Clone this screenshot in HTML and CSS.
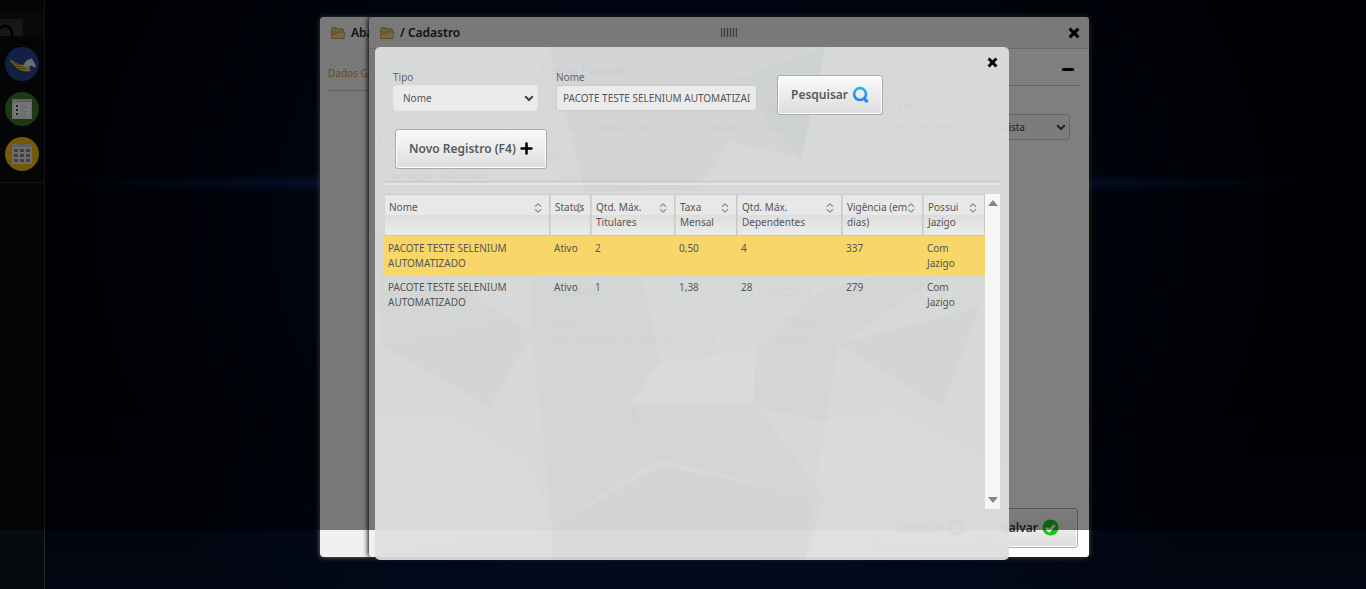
FILE: index.html
```html
<!DOCTYPE html>
<html lang="pt-BR">
<head>
<meta charset="utf-8">
<title>Cadastro</title>
<link rel="stylesheet" href="styles.css">
</head>
<body>
<svg class="defs" aria-hidden="true">
  <symbol id="folder" viewBox="0 0 16 14"><path d="M1.500 12V3l1-1.500h4l1 1.500h5.500l.5.800V6" fill="#e3bd70" stroke="#c29b50"/><path d="M7 2.500h5v1.500H7z" fill="#8fc0c8"/><path d="M1.500 12.500V8h4.500l1.500-2H15l-1 6.500z" fill="#f0cf88" stroke="#c29b50"/></symbol>
  <symbol id="cross" viewBox="0 0 12 12"><path d="M2.800 2.800l6.400 6.400M9.200 2.800L2.800 9.200" stroke="currentColor" stroke-width="3.200" stroke-linecap="square"/></symbol>
  <symbol id="chevron" viewBox="0 0 10 7"><path d="M1.200 1.200L5 5l3.800-3.800" fill="none" stroke="currentColor" stroke-width="2"/></symbol>
  <symbol id="sort" viewBox="0 0 8 10"><path d="M1 3.800L4 1l3 2.800M1 6.200L4 9l3-2.800" fill="none" stroke="#999" stroke-width="1.300"/></symbol>
</svg>

<nav class="sidebar">
  <div class="side-top"><button class="side-search" aria-label="Buscar"><svg viewBox="0 0 18 18"><circle cx="9" cy="9" r="7" fill="none" stroke="#000" stroke-width="2.500"/></svg></button></div>
  <div class="apps">
    <a class="app blue" href="#" aria-label="Início"><svg viewBox="0 0 34 34"><path d="M5 12c5 4 9 5 13 6 3 1 5 3 8 6-5 1-10 0-13-2-1-1-3-2-4-4-2-1-3-3-4-6z" fill="#e3bb32"/><path d="M7 16l9 2M9 19l10 1M12 21l9 1" stroke="#8a6b16" stroke-width=".7"/><path d="M18 19c2-4 4-7 8-7l1-1 .500 1.500L29 15l2 4-1 1.500-4-2c-2 1-2 2 0 5.500-3-3-3-4-8-5z" fill="#d9dbe0"/></svg></a>
    <a class="app green" href="#" aria-label="Cadastros"><svg viewBox="0 0 34 34"><path fill="#dcdcdc" d="M7 7h20v20H7z"/><path fill="#c0c0c0" d="M7 7h20v3H7z"/><path d="M8 8.500h6" stroke="#eee" stroke-dasharray="1 1"/><path fill="#f0f0f0" d="M9 11h16v14H9z"/><path fill="#444" d="M11 13h2v2h-2zM11 17h2v2h-2zM11 21h2v2h-2z"/><path stroke="#ccc" d="M15 13.500h6M15 15.500h8M15 17.500h5M15 19.500h8M15 21.500h6M15 23.500h7"/></svg></a>
    <a class="app gold" href="#" aria-label="Tabelas"><svg viewBox="0 0 34 34"><path fill="#d8d8d8" d="M7 7h20v20H7z"/><path fill="#bbb" d="M7 7h20v3H7z"/><path d="M8 8.500h6" stroke="#eee" stroke-dasharray="1 1"/><path fill="#808080" d="M9 12h4v3H9zM15 12h4v3h-4zM21 12h4v3h-4zM9 17h4v3H9zM15 17h4v3h-4zM21 17h4v3h-4zM9 22h4v3H9zM15 22h4v3h-4zM21 22h4v3h-4z"/></svg></a>
  </div>
</nav>

<section class="window back">
  <header class="window-head"><svg class="folder"><use href="#folder"/></svg><h1>Abas</h1></header>
  <ul class="tabs"><li><a href="#">Dados Gerais</a></li></ul>
</section>

<section class="window front">
  <header class="window-head">
    <svg class="folder"><use href="#folder"/></svg><h2>/ Cadastro</h2>
    <span class="grip"></span>
    <button class="icon-button" aria-label="Fechar cadastro"><svg class="cross"><use href="#cross"/></svg></button>
  </header>
  <div class="window-body">
    <ul class="menu">
      <li><a class="current" href="#">Dados Pessoais</a></li>
      <li><a href="#">Dados Complementares</a></li>
      <li><a href="#">Endereços da Pessoa</a></li>
      <li><a href="#">Informações Adicionais</a></li>
    </ul>
    <div class="main">
      <div class="section-head"><h3>Dados Pessoais</h3><button class="icon-button" aria-label="Recolher"><svg class="minus" viewBox="0 0 12 3"><rect width="12" height="3" rx="1"/></svg></button></div>
      <div class="person">
        <label class="field s6">Nome*<input value="POSTO COMBUSTÍVEL TESTE SELENIUM"></label>
        <label class="field s3">Tipo de Pessoa *<select><option>Jurídica</option></select></label>
        <label class="field s6">Órgão Emissor<span class="pick"><select><option>Carteira de Identidade Classista</option></select><svg class="chevron"><use href="#chevron"/></svg></span></label>
        <label class="field s15">Situação<select><option>Selecione</option></select></label>
        <label class="field s4 later">CNPJ<input value="41.526.894/1282-32"></label>
        <label class="field s6 later">Nome Fantasia<input value="POSTO COMBUSTÍVEL TESTE SELENIUM"></label>
        <span class="s5"></span>
        <label class="field s6">Inscrição Estadual<input value="58084420"></label>
        <label class="field s6">Inscrição Municipal<input value="60922919"></label>
        <span class="s3"></span>
        <label class="field s6">Pacote<input value="PACOTE TESTE SELENIUM AUTOMA"></label>
        <label class="field s6">Classificação<select><option>Selecione</option></select></label>
      </div>
    </div>
  </div>
  <footer class="window-foot">
    <button class="button">Cancelar <svg class="status" viewBox="0 0 18 18"><circle cx="9" cy="9" r="8.500" fill="#e0351b"/><path d="M5.500 5.500l7 7m0-7l-7 7" stroke="#fff" stroke-width="2.500"/></svg></button>
    <button class="button">Salvar <svg class="status" viewBox="0 0 18 18"><circle cx="9" cy="9" r="8.500" fill="#1fc31a"/><path d="M4.500 9.500l3 3 6-6" fill="none" stroke="#fff" stroke-width="2.800"/></svg></button>
  </footer>
</section>

<div class="shade"></div>

<section class="popup" role="dialog" aria-label="Pesquisa">
  <svg class="facets" viewBox="12 21 1529 1517" preserveAspectRatio="none" aria-hidden="true">
    <g fill="#888ea5" fill-opacity=".06"><path d="M430 21H1098L1040 350 870 300 790 440 520 450 480 250z"/><path d="M30 905L330 820 390 870 290 1085z"/><path d="M1130 900L1470 790 1380 1085z"/><path d="M440 1440L700 1260 1098 1355 1050 1538H440z"/></g>
    <g fill="#68706d" fill-opacity=".025"><path d="M870 120L1098 21 1040 350z"/><path d="M390 700L630 560 700 950 630 1070 690 1240 440 1440 390 870z"/><path d="M930 920L1090 740 1500 600 1130 900 1100 1130 925 1085z"/><path d="M12 560L330 820 30 905z"/><path d="M620 1075H925L1100 1355 690 1240z"/></g>
    <g fill="#fff" fill-opacity=".06"><path d="M170 1100L380 1240 440 1440 12 1538V1120z"/><path d="M700 950L930 920 925 1085H630z"/><path d="M1098 1130L1255 1095 1541 1260V1538H1050z"/></g>
  </svg>
  <button class="icon-button popup-close" aria-label="Fechar"><svg class="cross"><use href="#cross"/></svg></button>
  <form class="search">
    <div class="field tipo"><label for="tipo">Tipo</label><span class="pick"><select id="tipo"><option>Nome</option></select><svg class="chevron"><use href="#chevron"/></svg></span></div>
    <div class="field nome"><label for="nome">Nome</label><input id="nome" value="PACOTE TESTE SELENIUM AUTOMATIZADO"></div>
    <button class="button" type="button">Pesquisar <svg class="status" viewBox="0 0 18 18"><defs><linearGradient id="lens" x2="0" y2="1"><stop stop-color="#1ab7f5"/><stop offset="1" stop-color="#2a80f5"/></linearGradient></defs><circle cx="8.500" cy="8.500" r="6.300" fill="none" stroke="url(#lens)" stroke-width="2.800"/><path d="M13 13.500l2.500 2.500" stroke="#2a8af5" stroke-width="3.500" stroke-linecap="round"/></svg></button>
  </form>
  <div class="actions"><button class="button">Novo Registro (F4) <svg class="plus" viewBox="0 0 12 12"><path d="M6 1.500v9M1.500 6h9" stroke="#000" stroke-width="2.400" stroke-linecap="round"/></svg></button></div>
  <hr>
  <div class="results">
    <table>
      <colgroup><col><col class="c-status"><col class="c-tit"><col class="c-small"><col class="c-dep"><col class="c-vig"><col class="c-small"></colgroup>
      <thead><tr>
        <th>Nome<svg class="sort"><use href="#sort"/></svg></th><th>Status<svg class="sort"><use href="#sort"/></svg></th><th>Qtd. Máx. Titulares<svg class="sort"><use href="#sort"/></svg></th><th>Taxa Mensal<svg class="sort"><use href="#sort"/></svg></th><th>Qtd. Máx. Dependentes<svg class="sort"><use href="#sort"/></svg></th><th>Vigência (em dias)<svg class="sort"><use href="#sort"/></svg></th><th>Possui Jazigo<svg class="sort"><use href="#sort"/></svg></th>
      </tr></thead>
      <tbody>
        <tr class="selected"><td>PACOTE TESTE SELENIUM AUTOMATIZADO</td><td>Ativo</td><td>2</td><td>0,50</td><td>4</td><td>337</td><td>Com<br>Jazigo</td></tr>
        <tr><td>PACOTE TESTE SELENIUM AUTOMATIZADO</td><td>Ativo</td><td>1</td><td>1,38</td><td>28</td><td>279</td><td>Com<br>Jazigo</td></tr>
      </tbody>
    </table>
    <div class="track"><svg viewBox="0 0 10 6"><path d="M5 0l5 6H0z"/></svg><svg viewBox="0 0 10 6"><path d="M5 6l5-6H0z"/></svg></div>
  </div>
</section>
</body>
</html>
```
FILE: styles.css
```css
* { box-sizing: border-box; }
body {
  margin: 0;
  height: 100vh;
  overflow: hidden;
  position: relative;
  font: 10px/15px "Noto Sans", sans-serif;
  color: #555;
  background:
    radial-gradient(ellipse 46% 2% at 50% 31%, #0c3690, transparent),
    radial-gradient(ellipse 46% 90% at 50% 38%, #051238, transparent),
    linear-gradient(transparent 70%, #020713),
    #010208;
}
h1, h2, h3, ul { margin: 0; padding: 0; list-style: none; }
button, input, select { font: inherit; color: inherit; margin: 0; }
a { color: inherit; text-decoration: none; }
.defs { position: absolute; width: 0; height: 0; }

.sidebar { width: 45px; height: 100%; padding-top: 12px; border-right: 1px solid #24282b; background: #070b0d; }
.side-top { height: 24px; padding-top: 7px; background: #121314; overflow: hidden; }
.side-search { display: block; width: 23px; height: 20px; padding: 0; border: 0; border-radius: 0 3px 0 0; background: #2b3033; }
.side-search svg { display: block; width: 18px; height: 18px; margin: 5px 0 0 -4px; }
.apps { display: flex; flex-direction: column; gap: 11px; padding: 11px 5px; border-bottom: 1px solid #2a2c2e; }
.app { width: 34px; height: 34px; border-radius: 50%; }
.app svg { display: block; }
.blue { background: #244088; }
.green { background: #387029; }
.gold { background: #eab112; }

.window { position: absolute; top: 17px; right: 277px; bottom: 32px; border-radius: 4px; display: flex; flex-direction: column; box-shadow: 0 0 5px rgba(255, 240, 210, .5); }
.back { left: 320px; background: #f0f0f0; }
.front { left: 369px; background: #fff; box-shadow: -1px 0 5px #000; }
.window-head { display: flex; align-items: center; gap: 5px; height: 32px; padding: 0 9px 0 10px; border-bottom: 1px solid #d6d6d6; background: #f2f2f2; border-radius: 4px 4px 0 0; color: #222; }
.back .window-head { border-color: #f0f0f0; }
.window-head h1, .window-head h2 { font-size: 12px; line-height: 16px; font-weight: 600; }
.window-head h2 { flex: 1; white-space: nowrap; }
.folder { width: 16px; height: 14px; }
.grip { position: absolute; left: 50%; width: 16px; height: 9px; margin-left: -8px; background: repeating-linear-gradient(90deg, #777 0 1px, #ddd 1px 3px); }
.icon-button { display: flex; padding: 0; border: 0; background: none; color: #000; }
.cross { width: 12px; height: 12px; }
.tabs { margin: 17px 8px; padding: 0 0 9px; border-bottom: 1px solid #c5c5c5; color: #d39a10; }
.window-body { flex: 1; display: flex; }
.menu { width: 163px; padding: 17px 9px; background: #f0f0f0; display: flex; flex-direction: column; gap: 19px; }
.current { color: #d39a10; }
.main { flex: 1; padding: 0 9px; }
.section-head { display: flex; align-items: center; justify-content: space-between; height: 37px; padding: 5px 6px 0 0; border-bottom: 1px solid #c8c8c8; }
.section-head h3 { font-size: 12px; font-weight: 600; }
.minus { width: 12px; height: 3px; }
.person { display: grid; grid-template-columns: repeat(15, minmax(0, 1fr)); gap: 9px; padding: 13px 10px 0 5px; }
.s3 { grid-column: span 3; }
.s4 { grid-column: span 4; }
.s5 { grid-column: span 5; }
.s6 { grid-column: span 6; }
.s15 { grid-column: span 15; padding-right: 60%; }
.later { padding-top: 15px; }
.field { display: flex; flex-direction: column; color: #444; white-space: nowrap; }
.field input, .field select { width: 100%; height: 26px; padding: 0 6px; border: 1px solid #d8d8d8; border-radius: 3px; background: #f8f8f8; appearance: none; }
.field select { padding: 0 9px; }
.pick { position: relative; display: block; }
.person .pick select { border-color: #ccc; text-align: right; padding-right: 44px; }
.chevron { position: absolute; right: 4px; top: 10px; width: 10px; height: 7px; color: #444; pointer-events: none; }
.window-foot { display: flex; justify-content: flex-end; gap: 4px; padding: 0 11px 9px 0; background: linear-gradient(90deg, #f0f0f0 163px, #fff 163px); border-radius: 0 0 4px 4px; }

.button { display: flex; align-items: center; justify-content: center; gap: 4px; height: 40px; padding: 0 13px 1px; border: 1px solid #aaa; border-radius: 3px; background: linear-gradient(#fafafa, #ddd); box-shadow: inset 0 0 0 1px #fff; font: 600 12px/16px "Noto Sans", sans-serif; color: #5a5a5a; white-space: nowrap; }
.window-foot .button { padding: 0 18px 1px 13px; color: #333; }
.status { width: 17px; height: 17px; }
.plus { width: 13px; height: 13px; }

.shade { position: absolute; inset: 0 0 10%; background: rgba(0, 0, 0, .5); }

.popup { position: absolute; z-index: 0; left: 375px; right: 357px; top: 47px; bottom: 29px; padding: 23px 9px 0; border-radius: 5px; background: rgba(220, 222, 221, .945); }
.facets { position: absolute; inset: 0; width: 100%; height: 100%; z-index: -1; }
.popup-close { position: absolute; top: 10px; right: 11px; }
.popup-close .cross { width: 11px; height: 11px; }
.search { display: flex; gap: 18px; padding: 0 9px; }
.popup .field label { height: 15px; color: #666; }
.popup .field input, .popup .field select { border-color: #ccc; background: #ebebeb; color: #555; }
.popup .field select { border-color: #e6e6e6; }
.tipo { width: 145px; }
.nome { width: 201px; }
.search .button { margin: 5px 2px 0; }
.actions { display: flex; padding: 14px 11px 12px; }
hr { height: 4px; margin: 0 0 9px; border: 0; border-top: 1px solid #c4c6c5; border-bottom: 2px solid #e3e4e4; }
.results { display: flex; height: 315px; align-items: stretch; }
table { flex: 1; width: 100%; align-self: flex-start; border-collapse: separate; border-spacing: 0; table-layout: fixed; }
.c-status { width: 41px; }
.c-tit { width: 84px; }
.c-small { width: 62px; }
.c-dep { width: 105px; }
.c-vig { width: 81px; }
th { position: relative; height: 41px; padding: 5px 4px; border: 1px solid #c8c9c9; border-left-color: #d4d5d5; background: linear-gradient(#e8e8e8 50%, #dedede 51%, #ececec); font-weight: 400; text-align: left; vertical-align: top; }
.sort { position: absolute; right: 7px; top: 8px; width: 8px; height: 10px; }
td { height: 39px; padding: 5px 4px 4px; vertical-align: top; }
.selected { background: #f8d66a; }
.track { width: 15px; padding: 6px 3px; display: flex; flex-direction: column; justify-content: space-between; align-items: center; background: #f6f6f6; }
.track svg { width: 10px; height: 6px; fill: #858585; }
```
